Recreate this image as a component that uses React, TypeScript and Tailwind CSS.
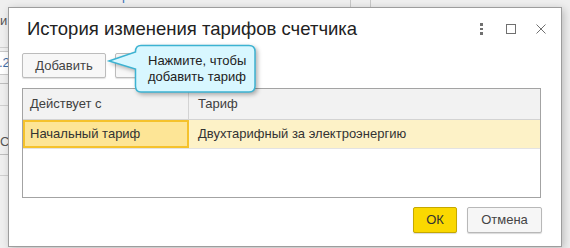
export default function App() {
  return (
    <div className="relative w-[570px] h-[248px] overflow-hidden bg-[#efefef] font-['Liberation_Sans',Arial,sans-serif] text-[13px] text-[#404040]">
      {/* Form behind the dialog */}
      <div className="flex flex-col w-full h-full">
        <div className="relative h-[7px] flex">
          <span className="ml-[122px] -mt-[12px] text-[#3b72b8] text-[13px] leading-[15px]">р</span>
          <div className="ml-[221px] w-px h-full bg-[#c8c8c8]" />
          <div className="ml-[19px] w-px h-full bg-[#c8c8c8]" />
        </div>
        <div className="flex flex-col w-[8px] text-[#555]">
          <span className="mt-[6px] leading-[16px] overflow-hidden">и</span>
          <div className="mt-[18px] h-px bg-[#cfcfcf]" />
          <div className="mt-[3px] h-[24px] bg-white border-y border-[#c8c8c8] flex items-center overflow-hidden">
            <span className="-ml-[1px] text-[#3f6ea8]">.2</span>
          </div>
          <div className="mt-[8px] h-px bg-[#bdbdbd]" />
          <div className="mt-[21px] h-px bg-[#cfcfcf]" />
          <span className="mt-[28px] leading-[16px] overflow-hidden">C</span>
          <div className="mt-[4px] h-px bg-[#bdbdbd]" />
          <div className="mt-[20px] h-px bg-[#cfcfcf]" />
        </div>
      </div>

      {/* Dialog window */}
      <div className="absolute left-[8px] top-[7px] w-[554px] h-[240px] bg-white border border-[#9d9d9d] shadow-[2px_2px_8px_rgba(0,0,0,0.22)] flex flex-col">
        {/* Title */}
        <div className="flex items-center h-[22px] mt-[10px] pl-[18px] pr-[15px]">
          <h1 className="text-[18.5px] leading-[22px] text-[#222] whitespace-nowrap">
            История изменения тарифов счетчика
          </h1>
          <div className="ml-auto flex items-center gap-[20px]">
            <div className="w-[10px] flex flex-col items-center gap-[2px]">
              <span className="w-[3px] h-[2.5px] bg-[#707070]" />
              <span className="w-[3px] h-[2.5px] bg-[#707070]" />
              <span className="w-[3px] h-[2.5px] bg-[#707070]" />
            </div>
            <div className="w-[10px] h-[10px] border border-[#707070]" />
            <svg width="10" height="10" viewBox="0 0 10 10">
              <path d="M0.5 0.5 L9.5 9.5 M9.5 0.5 L0.5 9.5" stroke="#707070" strokeWidth="1" />
            </svg>
          </div>
        </div>

        {/* Toolbar */}
        <div className="flex gap-[9px] mt-[13px] pl-[13px]">
          <button className="h-[25px] w-[84px] bg-[#f7f7f7] border border-[#bcbcbc] rounded-[2px] shadow-[0_1px_1px_rgba(0,0,0,0.12)] text-[13px] text-[#444]">
            Добавить
          </button>
          {/* second button, its label is hidden under the callout */}
          <button className="h-[25px] w-[90px] bg-[#f7f7f7] border border-[#bcbcbc] rounded-[2px] shadow-[0_1px_1px_rgba(0,0,0,0.12)]" />
        </div>

        {/* Table */}
        <div className="mt-[10px] ml-[13px] mr-[20px] h-[110px] border border-[#a3a3a3] flex flex-col">
          <div className="grid grid-cols-[166px_1fr] h-[31px] bg-[#f2f2f2] border-b border-[#d3d3d3]">
            <div className="flex items-center pl-[7px] border-r border-[#d3d3d3]">Действует с</div>
            <div className="flex items-center pl-[9px]">Тариф</div>
          </div>
          <div className="grid grid-cols-[166px_1fr] h-[29px] border-b border-[#e3e3e3]">
            <div className="flex items-center pl-[5px] bg-[#fde596] border-2 border-[#f5c22c] text-[#333]">
              Начальный тариф
            </div>
            <div className="flex items-center pl-[9px] bg-[#fdf2c7] text-[#333]">
              Двухтарифный за электроэнергию
            </div>
          </div>
        </div>

        {/* Footer */}
        <div className="flex justify-end gap-[10px] mt-[9px] pr-[19px]">
          <button className="h-[26px] w-[44px] bg-[#fad800] border border-[#c5a800] rounded-[2px] shadow-[0_1px_1px_rgba(0,0,0,0.15)] text-[13px] text-[#333]">
            ОК
          </button>
          <button className="h-[26px] w-[75px] bg-[#f6f6f6] border border-[#b8b8b8] rounded-[2px] shadow-[0_1px_1px_rgba(0,0,0,0.15)] text-[13px] text-[#444]">
            Отмена
          </button>
        </div>
      </div>

      {/* Tooltip callout */}
      <div className="absolute left-[105px] top-[43px] w-[156px] h-[56px]">
        <svg
          width="156"
          height="56"
          viewBox="0 0 156 56"
          className="absolute inset-0 drop-shadow-[2px_2px_2px_rgba(0,0,0,0.3)]"
        >
          <path
            d="M36 2.5 H144 Q150 2.5 150 8.5 V43 Q150 49 144 49 H36 Q30.5 49 30.5 43 V26 L4 18 L30.5 9 V8.5 Q30.5 2.5 36 2.5 Z"
            fill="#d8f7ff"
            stroke="#3cb3d2"
            strokeWidth="1.5"
          />
        </svg>
        <div className="absolute left-[43px] top-[10px] text-[13px] leading-[16px] text-[#222] whitespace-nowrap">
          Нажмите, чтобы
          <br />
          добавить тариф
        </div>
      </div>
    </div>
  );
}
